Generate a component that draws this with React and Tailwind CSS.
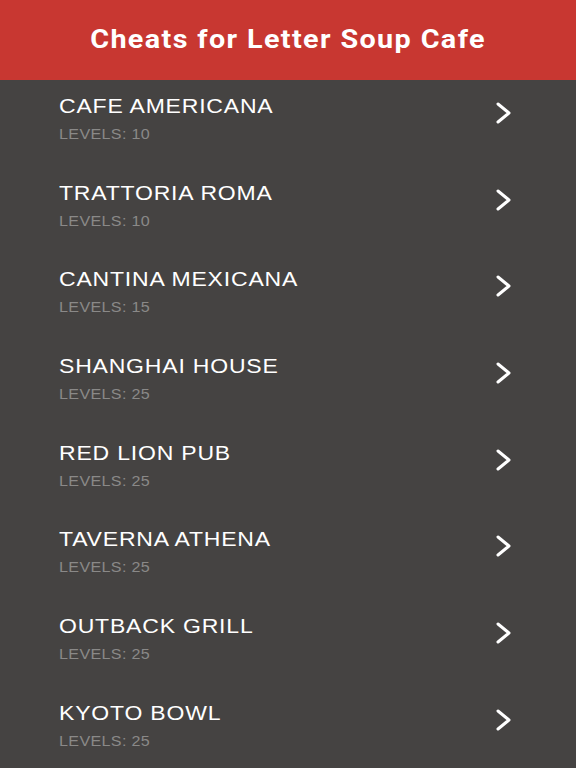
import React from 'react';

const places = [
  { name: 'CAFE AMERICANA', levels: 10 },
  { name: 'TRATTORIA ROMA', levels: 10 },
  { name: 'CANTINA MEXICANA', levels: 15 },
  { name: 'SHANGHAI HOUSE', levels: 25 },
  { name: 'RED LION PUB', levels: 25 },
  { name: 'TAVERNA ATHENA', levels: 25 },
  { name: 'OUTBACK GRILL', levels: 25 },
  { name: 'KYOTO BOWL', levels: 25 },
];

const Chevron = () => (
  <svg width="20" height="24" viewBox="0 0 20 24" className="mt-[21px] shrink-0">
    <polyline points="4,3 15,12 4,21" fill="none" stroke="#ffffff" strokeWidth="3" strokeLinecap="round" strokeLinejoin="round" />
  </svg>
);

const App = () => {
  return (
    <div className="w-[576px] h-[768px] overflow-hidden bg-[#454342] flex flex-col">
      <div className="h-[80px] shrink-0 bg-[#c83731] flex items-center justify-center">
        <h1 className="text-white text-[25px] font-bold tracking-[1.2px] scale-x-[1.15] font-['Roboto',sans-serif]">
          Cheats for Letter Soup Cafe
        </h1>
      </div>
      <div className="flex flex-col">
        {places.map((p) => (
          <div key={p.name} className="h-[86.67px] shrink-0 flex items-start justify-between pl-[59px] pr-[62px]">
            <div className="pt-[14px] font-['Liberation_Sans',Arial,sans-serif] origin-left scale-x-[1.15]">
              <div className="text-white text-[20px] leading-[24px] tracking-[0.7px]">{p.name}</div>
              <div className="mt-[6px] text-[#8a8988] text-[14px] leading-[20px] tracking-[0.3px]">LEVELS: {p.levels}</div>
            </div>
            <Chevron />
          </div>
        ))}
      </div>
    </div>
  );
};

export default App;
